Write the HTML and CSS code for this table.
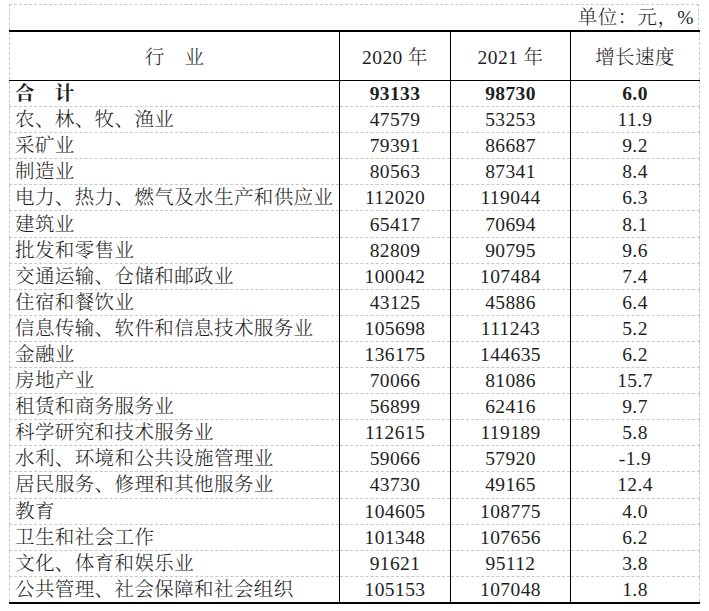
FILE: index.html
```html
<!DOCTYPE html>
<html lang="zh-CN">
<head>
<meta charset="utf-8">
<title>分行业平均工资</title>
<link rel="stylesheet" href="styles.css">
</head>
<body>
<div class="sheet">
  <div class="unit">单位：元，%</div>
  <table class="data">
    <colgroup>
      <col class="c1"><col class="c2"><col class="c3"><col class="c4">
    </colgroup>
    <thead>
      <tr>
        <th class="name">行　业</th>
        <th>2020 年</th>
        <th>2021 年</th>
        <th>增长速度</th>
      </tr>
    </thead>
    <tbody>
      <tr class="total"><td class="name">合　计</td><td>93133</td><td>98730</td><td>6.0</td></tr>
      <tr><td class="name">农、林、牧、渔业</td><td>47579</td><td>53253</td><td>11.9</td></tr>
      <tr><td class="name">采矿业</td><td>79391</td><td>86687</td><td>9.2</td></tr>
      <tr><td class="name">制造业</td><td>80563</td><td>87341</td><td>8.4</td></tr>
      <tr><td class="name">电力、热力、燃气及水生产和供应业</td><td>112020</td><td>119044</td><td>6.3</td></tr>
      <tr><td class="name">建筑业</td><td>65417</td><td>70694</td><td>8.1</td></tr>
      <tr><td class="name">批发和零售业</td><td>82809</td><td>90795</td><td>9.6</td></tr>
      <tr><td class="name">交通运输、仓储和邮政业</td><td>100042</td><td>107484</td><td>7.4</td></tr>
      <tr><td class="name">住宿和餐饮业</td><td>43125</td><td>45886</td><td>6.4</td></tr>
      <tr><td class="name">信息传输、软件和信息技术服务业</td><td>105698</td><td>111243</td><td>5.2</td></tr>
      <tr><td class="name">金融业</td><td>136175</td><td>144635</td><td>6.2</td></tr>
      <tr><td class="name">房地产业</td><td>70066</td><td>81086</td><td>15.7</td></tr>
      <tr><td class="name">租赁和商务服务业</td><td>56899</td><td>62416</td><td>9.7</td></tr>
      <tr><td class="name">科学研究和技术服务业</td><td>112615</td><td>119189</td><td>5.8</td></tr>
      <tr><td class="name">水利、环境和公共设施管理业</td><td>59066</td><td>57920</td><td>-1.9</td></tr>
      <tr><td class="name">居民服务、修理和其他服务业</td><td>43730</td><td>49165</td><td>12.4</td></tr>
      <tr><td class="name">教育</td><td>104605</td><td>108775</td><td>4.0</td></tr>
      <tr><td class="name">卫生和社会工作</td><td>101348</td><td>107656</td><td>6.2</td></tr>
      <tr><td class="name">文化、体育和娱乐业</td><td>91621</td><td>95112</td><td>3.8</td></tr>
      <tr class="last"><td class="name">公共管理、社会保障和社会组织</td><td>105153</td><td>107048</td><td>1.8</td></tr>
    </tbody>
  </table>
</div>
</body>
</html>
```
FILE: styles.css
```css
html, body {
  margin: 0;
  padding: 0;
  background: #ffffff;
}

body {
  font-family: "Liberation Serif", "Noto Serif CJK SC", "Noto Sans CJK SC", serif;
  font-size: 19.5px;
  color: #1e1e1e;
}

.sheet {
  width: 690px;
  margin: 4px 0 0 9px;
}

.unit {
  height: 26px;
  box-sizing: border-box;
  border-top: 1px dashed #c8c8c8;
  border-left: 1px dashed #c8c8c8;
  border-right: 1px dashed #c8c8c8;
  text-align: right;
  padding-right: 4px;
  line-height: 26px;
  font-weight: 300;
  letter-spacing: 0.4px;
}

.data {
  width: 690px;
  border-collapse: collapse;
  table-layout: fixed;
}

.c1 { width: 330px; }
.c2 { width: 111px; }
.c3 { width: 120px; }
.c4 { width: 129px; }

.data th,
.data td {
  padding: 0;
  text-align: center;
  font-weight: 300;
  letter-spacing: 0.4px;
  white-space: nowrap;
  border-left: 1px solid #000;
  border-right: 1px solid #000;
}

.data th {
  height: 48px;
  border-top: 2px solid #000;
  border-bottom: 1px solid #000;
}

.data td {
  height: 25.1px;
  line-height: 25px;
  border-bottom: 1px dashed #c8c8c8;
}

.data th:first-child,
.data td:first-child {
  border-left: 1px dashed #c8c8c8;
}

.data th:last-child,
.data td:last-child {
  border-right: 1px dashed #c8c8c8;
}

.data td.name {
  text-align: left;
  padding-left: 5px;
}

.data th.name {
  text-align: center;
}

.total td {
  font-weight: 700;
}

.last td {
  border-bottom: 2px solid #000;
}
```
